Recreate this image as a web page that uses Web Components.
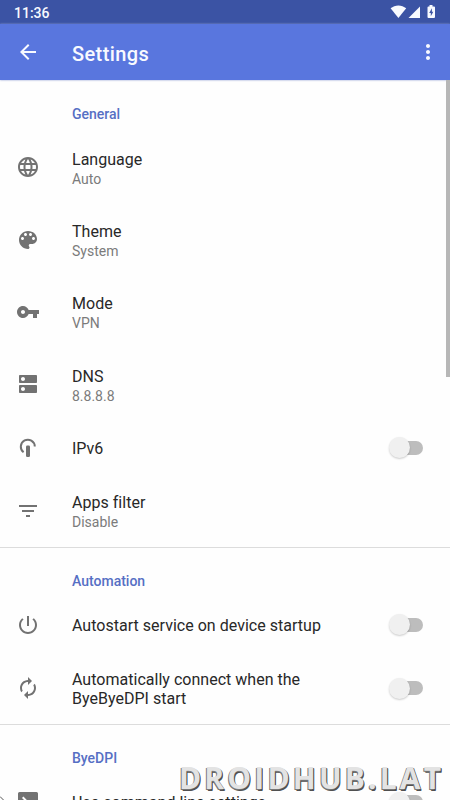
<!DOCTYPE html>
<html lang="en"><head><meta charset="utf-8"><title>Settings</title>
<style>html,body{margin:0;height:100%;overflow:hidden;background:#fefefe}body{font-family:Roboto,sans-serif}</style></head>
<body>
<settings-screen></settings-screen>
<script>
const ICONS={
globe:'<path d="M11.99 2C6.47 2 2 6.48 2 12s4.47 10 9.99 10C17.52 22 22 17.52 22 12S17.52 2 11.99 2zm6.93 6h-2.95c-.32-1.25-.78-2.45-1.38-3.56 1.84.63 3.37 1.91 4.33 3.56zM12 4.04c.83 1.2 1.48 2.53 1.91 3.96h-3.82c.43-1.43 1.08-2.76 1.91-3.96zM4.26 14C4.1 13.36 4 12.69 4 12s.1-1.36.26-2h3.38c-.08.66-.14 1.32-.14 2s.06 1.34.14 2H4.26zm.82 2h2.95c.32 1.25.78 2.45 1.38 3.56-1.84-.63-3.37-1.9-4.33-3.56zm2.95-8H5.08c.96-1.66 2.49-2.93 4.33-3.56C8.81 5.55 8.35 6.75 8.03 8zM12 19.96c-.83-1.2-1.48-2.53-1.91-3.96h3.82c-.43 1.43-1.08 2.76-1.91 3.96zM14.34 14H9.66c-.09-.66-.16-1.32-.16-2s.07-1.35.16-2h4.68c.09.65.16 1.32.16 2s-.07 1.34-.16 2zm.25 5.56c.6-1.11 1.06-2.31 1.38-3.56h2.95c-.96 1.65-2.49 2.93-4.33 3.56zM16.36 14c.08-.66.14-1.32.14-2s-.06-1.34-.14-2h3.38c.16.64.26 1.31.26 2s-.1 1.36-.26 2h-3.38z"/>',
palette:'<path d="M12 3c-4.97 0-9 4.03-9 9s4.03 9 9 9c.83 0 1.5-.67 1.5-1.5 0-.39-.15-.74-.39-1.01-.23-.26-.38-.61-.38-.99 0-.83.67-1.5 1.5-1.5H16c2.76 0 5-2.24 5-5 0-4.42-4.03-8-9-8zm-5.500 9c-.83 0-1.500-.67-1.500-1.500S5.670 9 6.500 9 8 9.670 8 10.500 7.330 12 6.500 12zm3-4C8.670 8 8 7.330 8 6.500S8.670 5 9.500 5s1.500.67 1.500 1.500S10.330 8 9.500 8zm5 0c-.83 0-1.500-.67-1.500-1.500S13.670 5 14.500 5s1.500.67 1.500 1.500S15.330 8 14.500 8zm3 4c-.83 0-1.500-.67-1.500-1.500S16.670 9 17.500 9s1.500.67 1.500 1.500-.67 1.500-1.500 1.500z"/>',
key:'<path d="M12.65 10C11.83 7.67 9.61 6 7 6c-3.310 0-6 2.690-6 6s2.690 6 6 6c2.610 0 4.830-1.670 5.650-4H17v4h4v-4h2v-4H12.650zM7 14c-1.100 0-2-.900-2-2s.900-2 2-2 2 .900 2 2-.900 2-2 2z"/>',
dns:'<path d="M20 13H4c-.55 0-1 .45-1 1v6c0 .55.45 1 1 1h16c.55 0 1-.45 1-1v-6c0-.55-.45-1-1-1zM7 19c-1.100 0-2-.900-2-2s.900-2 2-2 2 .900 2 2-.900 2-2 2zM20 3H4c-.55 0-1 .45-1 1v6c0 .55.45 1 1 1h16c.55 0 1-.45 1-1V4c0-.55-.45-1-1-1zM7 9c-1.100 0-2-.900-2-2s.900-2 2-2 2 .900 2 2-.900 2-2 2z"/>',
tether:'<path d="M7.600 16.300A7 7 0 1 1 18.800 10.500" fill="none" stroke="currentColor" stroke-width="2"/><rect x="10" y="9.500" width="4" height="11.500" rx="1.200"/>',
filter:'<path d="M10 18h4v-2h-4v2zM3 6v2h18V6H3zm3 7h12v-2H6v2z"/>',
power:'<path d="M13 3h-2v10h2V3zm4.830 2.170l-1.420 1.420C17.990 7.860 19 9.810 19 12c0 3.870-3.130 7-7 7s-7-3.130-7-7c0-2.190 1.010-4.140 2.580-5.420L6.170 5.170C4.230 6.820 3 9.260 3 12c0 4.970 4.030 9 9 9s9-4.030 9-9c0-2.740-1.230-5.180-3.170-6.830z"/>',
renew:'<path d="M12 6v3l4-4-4-4v3c-4.420 0-8 3.580-8 8 0 1.570.46 3.030 1.240 4.260L6.700 14.800c-.45-.83-.7-1.790-.7-2.800 0-3.310 2.690-6 6-6zm6.760 1.740L17.300 9.200c.44.84.7 1.790.7 2.800 0 3.310-2.690 6-6 6v-3l-4 4 4 4v-3c4.420 0 8-3.580 8-8 0-1.570-.46-3.030-1.240-4.260z"/>',
terminal:'<path fill-rule="evenodd" d="M3.500 2h17Q22 2 22 3.500v17Q22 22 20.500 22h-17Q2 22 2 20.500v-17Q2 2 3.500 2zM6 8l4 4-4 4 1.400 1.400L12.800 12 7.400 6.600z"/>',
back:'<path d="M20 11H7.830l5.590-5.590L12 4l-8 8 8 8 1.410-1.410L7.830 13H20v-2z"/>',
more:'<path d="M12 8c1.100 0 2-.900 2-2s-.900-2-2-2-2 .900-2 2 .900 2 2 2zm0 2c-1.100 0-2 .900-2 2s.900 2 2 2 2-.900 2-2-.900-2-2-2zm0 6c-1.100 0-2 .900-2 2s.900 2 2 2 2-.900 2-2-.900-2-2-2z"/>'};
function define(name,html,setup){customElements.define(name,class extends HTMLElement{
constructor(){super();this.attachShadow({mode:'open'})}
connectedCallback(){this.shadowRoot.innerHTML=html;if(setup)setup(this,this.shadowRoot)}})}
define('ui-icon','<style>:host{display:block;width:24px;height:24px;flex:none}svg{display:block;width:100%;height:100%;fill:currentColor}</style><svg viewBox="0 0 24 24"></svg>',(h,r)=>{r.querySelector('svg').innerHTML=ICONS[h.getAttribute('name')]});
define('status-bar',`<style>:host{display:flex;height:24px;background:#3b53a4;color:#f8faff;align-items:center;padding:0 14px 0 14px;box-sizing:border-box;font:500 14px/26px Roboto,sans-serif}span{flex:1;padding-top:1px}svg{fill:currentColor;display:block}</style>
<span>11:36</span><svg width="46" height="24" viewBox="0 0 46 24"><path d="M.6 8.300C5 4.400 11.800 4.400 16.200 8.300L8.400 18z"/><path d="M30 6.500V18H18.500z"/><path fill-rule="evenodd" d="M39.500 5h3v1.400H44q1 0 1 1v9.600q0 1-1 1h-5.500q-1 0-1-1V7.400q0-1 1-1h1zM41.900 8.300l-2.700 4.600h1.600v3.300l2.500-4.500h-1.400z"/></svg>`);
define('app-bar',`<style>:host{display:flex;height:56px;background:#5976de;color:#f8faff;align-items:center;padding:0 10px 0 16px;box-sizing:border-box;box-shadow:0 0 2px #8899d0}h1{font:500 20px/24px Roboto,sans-serif;margin:3px 0 0 32px;flex:1;letter-spacing:.4px}</style><ui-icon name="back"></ui-icon><h1><slot></slot></h1><ui-icon name="more"></ui-icon>`);
define('pref-group',`<style>:host{display:block}:host([divided]){box-shadow:inset 0 1px #dcdcdc}h2{margin:0;height:51px;box-sizing:border-box;padding:25px 0 0 72px;font:500 14px/18px Roboto,sans-serif;color:#566fc4}</style><h2></h2><slot></slot>`,(h,r)=>{r.querySelector('h2').textContent=h.getAttribute('label')});
define('toggle-switch',`<style>:host{display:flex;width:34px;height:22px;align-items:center}i{width:21px;height:21px;border-radius:50%;background:#f0f0f0;box-shadow:0 1px 2px #0003;z-index:1;margin-left:-1px}b{width:24px;height:14px;border-radius:0 7px 7px 0;background:#bdbdbd;margin-left:-11px}</style><i></i><b></b>`);
define('pref-row',`<style>:host{display:flex;height:72.4px;box-sizing:border-box;align-items:center;padding:0 26px 0 16px;color:#727272}:host([single]){height:54px}.t{flex:1;margin-left:32px;padding-top:1px}:host([summary]) .t{padding-top:4px}.n{color:#282828;font:400 16px/19px Roboto,sans-serif;white-space:pre-line;letter-spacing:.02px}.s{font:400 14px/19px Roboto,sans-serif;color:#7b7b7b;margin-top:1px}.s:empty{display:none}</style><ui-icon></ui-icon><div class="t"><div class="n"><slot></slot></div><div class="s"></div></div>`,(h,r)=>{
r.querySelector('ui-icon').replaceWith(Object.assign(document.createElement('div'),{innerHTML:'<ui-icon name="'+h.getAttribute('icon')+'"></ui-icon>'}));
r.querySelector('.s').textContent=h.getAttribute('summary')||'';
if(h.hasAttribute('toggle'))r.appendChild(document.createElement('toggle-switch'))});
define('water-mark',`<style>:host{position:absolute;left:179px;top:760px;font:700 30px/36px "Open Sans",sans-serif;color:#e3e3e3;letter-spacing:3.15px;text-shadow:-1px 1px #777,1px 1px #555,1px 2px #505050;white-space:nowrap}</style><slot></slot>`);
define('settings-screen',`<style>:host{display:block;position:relative;height:800px;width:450px;overflow:hidden;background:#fefefe}.bar{position:absolute;right:0;top:80px;width:4px;height:297px;background:#b7b7b7}.edge{position:absolute;left:0;top:796px;width:4px;height:4px}</style>
<status-bar></status-bar><app-bar>Settings</app-bar>
<pref-group label="General"><pref-row icon="globe" summary="Auto">Language</pref-row><pref-row icon="palette" summary="System">Theme</pref-row><pref-row icon="key" summary="VPN">Mode</pref-row><pref-row icon="dns" summary="8.8.8.8">DNS</pref-row><pref-row icon="tether" single toggle>IPv6</pref-row><pref-row icon="filter" summary="Disable">Apps filter</pref-row></pref-group>
<pref-group label="Automation" divided><pref-row icon="power" single toggle>Autostart service on device startup</pref-row><pref-row icon="renew" toggle>Automatically connect when the
ByeByeDPI start</pref-row></pref-group>
<pref-group label="ByeDPI" divided><pref-row icon="terminal" single toggle>Use command line settings</pref-row></pref-group>
<div class="bar"></div><svg class="edge" viewBox="0 0 4 4"><path d="M0 .5L3.500 4" fill="none" stroke="#555"/></svg><water-mark>DROIDHUB.LAT</water-mark>`);
</script></body></html>
